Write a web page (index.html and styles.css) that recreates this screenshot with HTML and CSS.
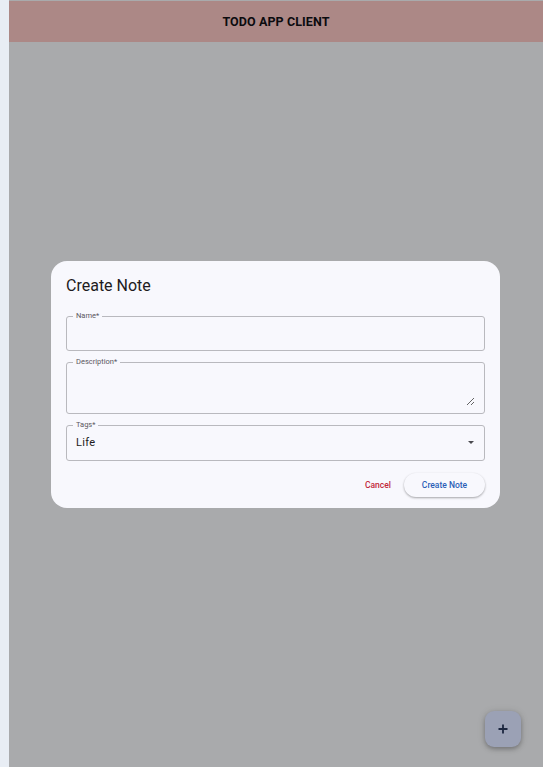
FILE: index.html
```html
<!DOCTYPE html>
<html>
<head>
<meta charset="utf-8">
<link rel="stylesheet" href="styles.css">
</head>
<body>
<div class="app">
  <header class="topbar">TODO APP CLIENT</header>
  <main class="content"></main>
  <button class="fab" aria-label="Add">
    <svg width="12" height="12" viewBox="0 0 12 12"><path d="M6 1.5v9M1.5 6h9" stroke="#1c2740" stroke-width="1.8" fill="none"/></svg>
  </button>
  <div class="overlay">
    <div class="dialog">
      <h2 class="dialog-title">Create Note</h2>
      <div class="field field-name">
        <span class="field-label">Name*</span>
      </div>
      <div class="field field-desc">
        <span class="field-label">Description*</span>
        <textarea class="desc-input"></textarea>
      </div>
      <div class="field field-tags">
        <span class="field-label">Tags*</span>
        <span class="select-value">Life</span>
        <span class="caret"></span>
      </div>
      <div class="actions">
        <button class="btn-cancel">Cancel</button>
        <button class="btn-create">Create Note</button>
      </div>
    </div>
  </div>
</div>
</body>
</html>
```
FILE: styles.css
```css
* { box-sizing: border-box; }
html, body { margin: 0; padding: 0; }
body {
  background: #e8edf4;
  font-family: Roboto, "Liberation Sans", sans-serif;
  width: 543px;
  height: 767px;
  overflow: hidden;
}
.app {
  position: relative;
  margin-left: 9px;
  height: 767px;
  padding-top: 1px;
  background: #a9aaac;
  display: flex;
  flex-direction: column;
}
.topbar {
  height: 41px;
  background: #ac8886;
  display: flex;
  align-items: center;
  justify-content: center;
  font-weight: 700;
  font-size: 12.5px;
  color: #0b0b0e;
  letter-spacing: 0.1px;
}
.content { flex: 1; }
.fab {
  position: absolute;
  right: 22px;
  bottom: 20px;
  width: 36px;
  height: 36px;
  border: none;
  border-radius: 9px;
  background: #9ba1b5;
  box-shadow: 0 2px 4px rgba(0,0,0,0.25), 0 1px 8px rgba(0,0,0,0.12);
  display: flex;
  align-items: center;
  justify-content: center;
  padding: 0;
}
.overlay {
  position: absolute;
  inset: 0;
  display: flex;
  align-items: center;
  justify-content: center;
  padding: 1px 1px 0 0;
}
.dialog {
  width: 449px;
  height: 247px;
  background: #f8f8fd;
  border-radius: 16px;
  padding: 15px 15px 11px 15px;
  display: flex;
  flex-direction: column;
}
.dialog-title {
  margin: 0;
  font-weight: 400;
  font-size: 16px;
  line-height: 20px;
  color: #1d1b20;
}
.field {
  position: relative;
  border: 1px solid #b9b9be;
  border-radius: 3px;
}
.field-name { height: 35px; margin-top: 20px; }
.field-desc { height: 52px; margin-top: 11px; padding: 8px 9px 7px 9px; }
.field-tags { height: 36px; margin-top: 11px; display: flex; align-items: center; padding: 0 9px; }
.field-label {
  position: absolute;
  top: -6px;
  left: 6px;
  padding: 0 3px;
  background: #f8f8fd;
  font-size: 7.5px;
  line-height: 10px;
  color: #5a5760;
}
.desc-input {
  display: block;
  width: 100%;
  height: 100%;
  border: none;
  background: transparent;
  resize: vertical;
  outline: none;
  padding: 0;
  margin: 0;
}
.select-value {
  font-size: 11px;
  color: #1d1b20;
  letter-spacing: 0.3px;
  flex: 1;
}
.caret {
  width: 0;
  height: 0;
  border-left: 3.5px solid transparent;
  border-right: 3.5px solid transparent;
  border-top: 3.5px solid #4a4a4f;
  margin-right: 1px;
}
.actions {
  margin-top: auto;
  display: flex;
  justify-content: flex-end;
  align-items: center;
  gap: 2px;
}
.actions button {
  font-family: Roboto, "Liberation Sans", sans-serif;
  font-weight: 500;
  font-size: 8.5px;
  border: none;
  height: 24px;
  border-radius: 12px;
  cursor: pointer;
}
.btn-cancel {
  background: transparent;
  color: #c2283a;
  padding: 0 11px;
}
.btn-create {
  background: #f8f8fd;
  color: #2b5fb7;
  width: 81px;
  box-shadow: 0 1px 2px rgba(0,0,0,0.25), 0 1px 3px rgba(0,0,0,0.1);
}
```
